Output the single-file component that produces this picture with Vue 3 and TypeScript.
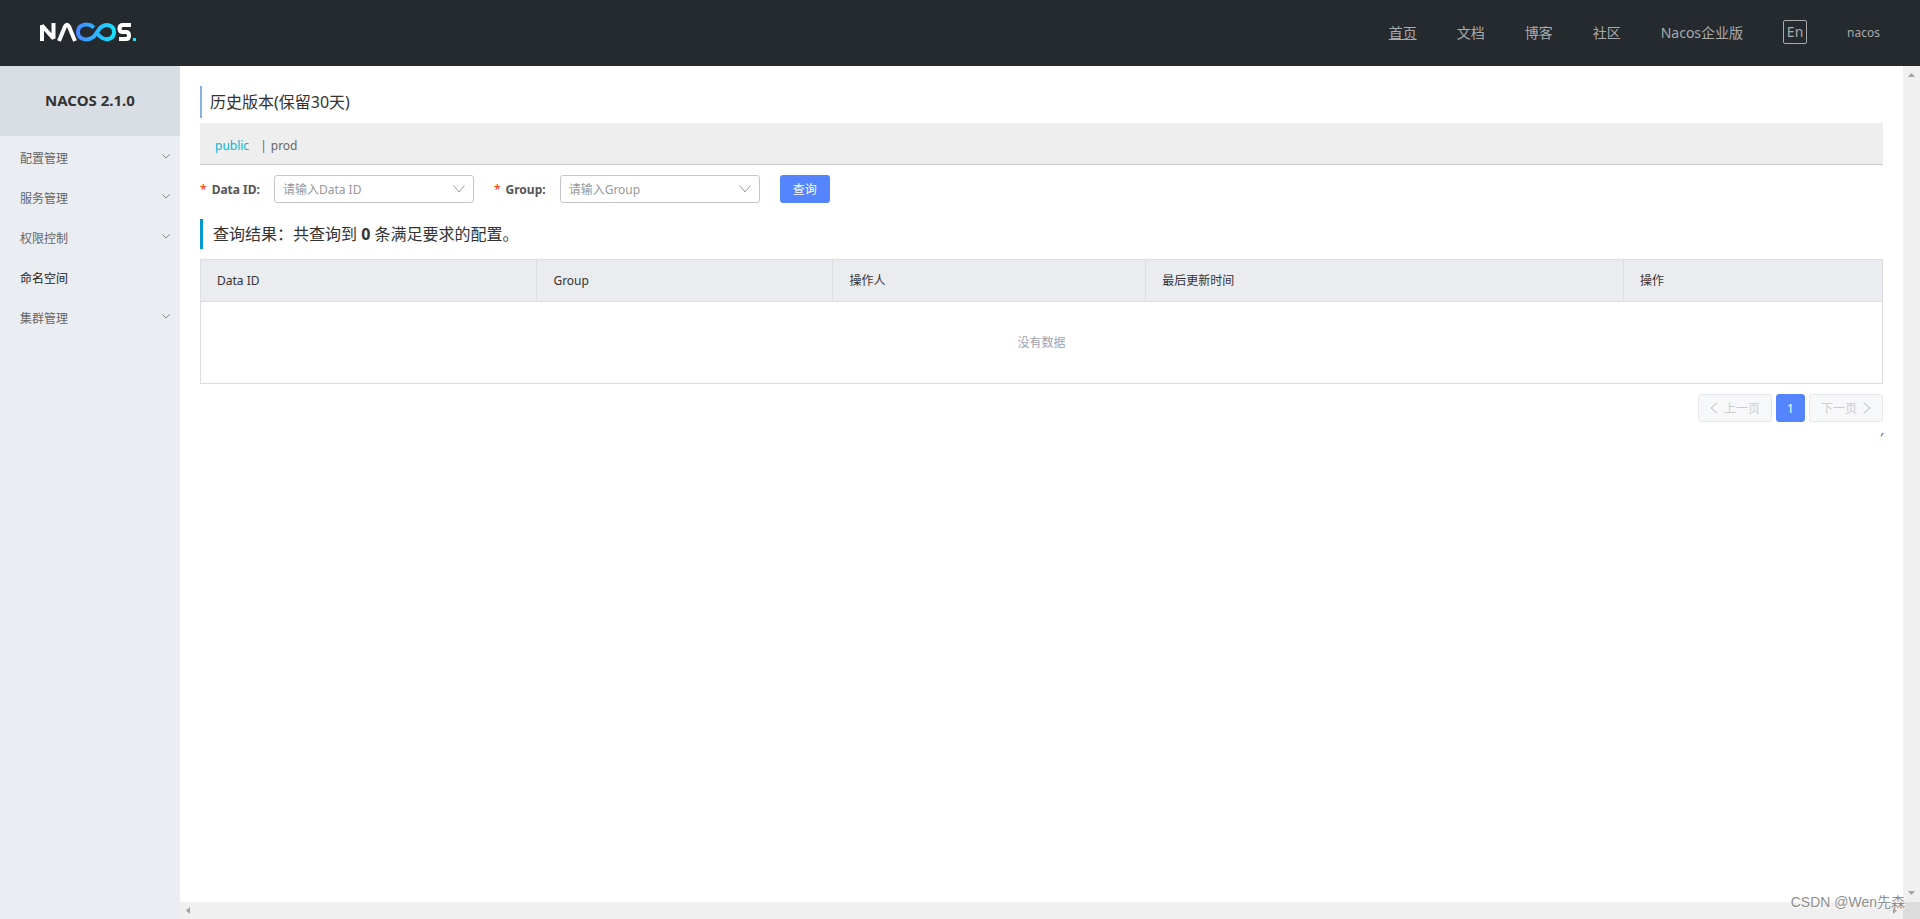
<script setup lang="ts">
import { ref } from 'vue'

const links: string[] = ['首页', '文档', '博客', '社区', 'Nacos企业版']
const menu = [
  { label: '配置管理', group: true },
  { label: '服务管理', group: true },
  { label: '权限控制', group: true },
  { label: '命名空间', group: false },
  { label: '集群管理', group: true },
]
const columns: string[] = ['Data ID', 'Group', '操作人', '最后更新时间', '操作']
const dataId = ref('')
const group = ref('')
</script>

<template>
  <div class="page">
    <header class="top">
      <a href="#" class="logo" aria-label="Nacos">
        <svg width="98" height="20" viewBox="0 0 98 20" fill="none" stroke-width="4">
          <defs>
            <linearGradient id="loop" gradientUnits="userSpaceOnUse" x1="36" y1="0" x2="76" y2="0">
              <stop offset="0" stop-color="#4687ff" />
              <stop offset="1" stop-color="#12e6ff" />
            </linearGradient>
          </defs>
          <path d="M2 19V3.500L13.500 16.500V1" stroke="#fff" stroke-linejoin="bevel" />
          <path d="M19 19L25 4.500Q27 1 29 4.500L35 19" stroke="#fff" />
          <path d="M54 5.500C48 0.500 38 2 38 10S48 19.500 54 14.500L60 6C66 0.500 74 3 74 10S66 19.500 60 14.500L56 10" stroke="url(#loop)" />
          <path d="M91 3H83Q79.500 3 79.500 6.500T83 10H86Q89 10 89 13.500T86 17H79" stroke="#fff" />
          <rect x="93" y="16" width="3" height="3" fill="#12e6ff" />
        </svg>
      </a>
      <nav class="links">
        <a v-for="(l, i) in links" :key="l" href="#" :class="{ under: i === 0 }">{{ l }}</a>
        <button type="button" class="lang">En</button>
        <a href="#" class="user">nacos</a>
      </nav>
    </header>

    <div class="body">
      <aside class="side">
        <h1 class="version">NACOS 2.1.0</h1>
        <ul class="menu">
          <li v-for="m in menu" :key="m.label">
            <a href="#" :class="{ leaf: !m.group }">
              <span>{{ m.label }}</span>
              <svg v-if="m.group" width="8" height="5" viewBox="0 0 8 5" fill="none" stroke="#888">
                <path d="M0.500 0.500L4 4L7.500 0.500" />
              </svg>
            </a>
          </li>
        </ul>
      </aside>

      <div class="pane">
        <main class="content">
          <h2 class="title">历史版本(保留30天)</h2>
          <div class="spaces">
            <a href="#" class="current">public</a>
            <span class="bar">|</span>
            <a href="#">prod</a>
          </div>

          <form class="query" @submit.prevent>
            <label for="data-id"><i>*</i>Data ID:</label>
            <div class="select">
              <select id="data-id" v-model="dataId">
                <option value="">请输入Data ID</option>
              </select>
              <svg width="12" height="8" viewBox="0 0 12 8" fill="none" stroke="#999"><path d="M0.500 0.500L6 7L11.500 0.500" /></svg>
            </div>
            <label for="group"><i>*</i>Group:</label>
            <div class="select">
              <select id="group" v-model="group">
                <option value="">请输入Group</option>
              </select>
              <svg width="12" height="8" viewBox="0 0 12 8" fill="none" stroke="#999"><path d="M0.500 0.500L6 7L11.500 0.500" /></svg>
            </div>
            <button type="submit">查询</button>
          </form>

          <h3 class="result">查询结果：共查询到 <strong>0</strong> 条满足要求的配置。</h3>

          <table>
            <colgroup>
              <col class="c1" /><col class="c2" /><col class="c3" /><col class="c4" /><col class="c5" />
            </colgroup>
            <thead>
              <tr><th v-for="c in columns" :key="c" scope="col">{{ c }}</th></tr>
            </thead>
            <tbody>
              <tr><td :colspan="columns.length">没有数据</td></tr>
            </tbody>
          </table>

          <nav class="pager">
            <button type="button" disabled>
              <svg width="8" height="12" viewBox="0 0 8 12" fill="none" stroke="#bbb"><path d="M7.500 0.500L1 6L7.500 11.500" /></svg>
              <span>上一页</span>
            </button>
            <button type="button" class="on">1</button>
            <button type="button" disabled>
              <span>下一页</span>
              <svg width="8" height="12" viewBox="0 0 8 12" fill="none" stroke="#bbb"><path d="M0.500 0.500L7 6L0.500 11.500" /></svg>
            </button>
          </nav>
          <p class="mark">′</p>
        </main>
        <div class="track vertical">
          <svg width="7" height="4" viewBox="0 0 7 4" fill="#a3a3a3"><path d="M3.500 0L7 4H0Z" /></svg>
          <svg width="7" height="4" viewBox="0 0 7 4" fill="#a3a3a3"><path d="M0 0H7L3.500 4Z" /></svg>
        </div>
        <div class="track horizontal">
          <svg width="4" height="7" viewBox="0 0 4 7" fill="#a3a3a3"><path d="M4 0V7L0 3.500Z" /></svg>
          <svg width="4" height="7" viewBox="0 0 4 7" fill="#a3a3a3"><path d="M0 0L4 3.500L0 7Z" /></svg>
        </div>
        <div class="corner"></div>
      </div>
    </div>
    <div class="watermark">CSDN @Wen先森</div>
  </div>
</template>

<style>
body {
  margin: 0;
}
</style>

<style scoped>
.page {
  position: relative;
  display: flex;
  flex-direction: column;
  height: 100vh;
  font: 12px/18px "Noto Sans", "Noto Sans CJK SC", sans-serif;
  color: #333;
}
.page * {
  box-sizing: border-box;
}
a {
  color: inherit;
  text-decoration: none;
}
button,
select {
  font: inherit;
}
h1,
h2,
h3,
p,
ul {
  margin: 0;
  padding: 0;
  font-weight: normal;
  list-style: none;
}
.top {
  display: flex;
  align-items: center;
  justify-content: space-between;
  height: 66px;
  padding: 0 40px 2px;
  background: #252a2f;
}
.logo {
  display: flex;
}
.links {
  display: flex;
  align-items: center;
  gap: 40px;
  font-size: 14px;
  color: #a8aaac;
}
.links a {
  padding-top: 2px;
}
.links .under {
  text-decoration: underline;
}
.lang {
  width: 24px;
  height: 24px;
  padding: 0;
  border: 1px solid #a8aaac;
  border-radius: 2px;
  background: none;
  color: inherit;
  line-height: 20px;
}
.links .user {
  font-size: 12px;
}
.body {
  display: flex;
  flex: 1;
  min-height: 0;
}
.side {
  width: 180px;
  background: #eaedf2;
}
.version {
  height: 70px;
  background: #d9dde4;
  font-size: 15px;
  font-weight: bold;
  line-height: 68px;
  text-align: center;
}
.menu a {
  display: flex;
  align-items: center;
  justify-content: space-between;
  height: 40px;
  padding: 0 10px 0 20px;
  color: #666;
}
.menu span {
  padding-top: 6px;
}
.menu .leaf {
  color: #222;
}
.pane {
  display: grid;
  flex: 1;
  grid-template-columns: 1fr 17px;
  grid-template-rows: 1fr 17px;
  min-width: 0;
}
.content {
  padding: 20px;
  min-width: 0;
}
.title {
  height: 32px;
  margin-bottom: 5px;
  padding-left: 8px;
  border-left: 2px solid #86b3de;
  font-size: 16px;
  line-height: 32px;
}
.spaces {
  display: flex;
  height: 42px;
  padding: 0 15px;
  border-bottom: 1px solid #ccc;
  background: #eee;
  color: #666;
  line-height: 45px;
}
.spaces .current {
  color: #00b7d3;
}
.bar {
  margin: 0 4px 0 11px;
}
.query {
  display: flex;
  align-items: center;
  margin: 10px 0 16px;
}
.query label {
  padding-top: 2px;
  margin-right: 14px;
  color: #555;
  font-weight: bold;
}
.query i {
  margin-right: 5px;
  color: #ff3000;
  font-weight: normal;
  font-style: normal;
}
.select {
  position: relative;
  width: 200px;
  margin-right: 20px;
}
.select select {
  display: block;
  width: 100%;
  height: 28px;
  padding: 2px 28px 0 8px;
  border: 1px solid #c4c6cf;
  border-radius: 3px;
  background: #fff;
  color: #999;
  appearance: none;
}
.select svg {
  position: absolute;
  top: 10px;
  right: 9px;
  pointer-events: none;
}
.query button {
  width: 50px;
  height: 28px;
  padding: 2px 0 0;
  border: 0;
  border-radius: 3px;
  background: #5584ff;
  color: #fff;
}
.result {
  height: 30px;
  margin-bottom: 10px;
  padding-left: 10px;
  border-left: 3px solid #09c;
  font-size: 16px;
  line-height: 30px;
}
table {
  width: 100%;
  border-collapse: collapse;
  table-layout: fixed;
}
.c1 { width: 20%; }
.c2 { width: 17.600%; }
.c3 { width: 18.600%; }
.c4 { width: 28.400%; }
.c5 { width: 15.400%; }
th,
td {
  border: 1px solid #dcdee3;
}
th {
  height: 42px;
  padding: 0 16px;
  background: #ebecf0;
  font-weight: normal;
  text-align: left;
}
td {
  height: 82px;
  padding: 0;
  color: #a0a2ad;
  text-align: center;
}
.pager {
  display: flex;
  justify-content: flex-end;
  gap: 4px;
  margin-top: 10px;
}
.pager button {
  display: flex;
  align-items: center;
  justify-content: center;
  gap: 6px;
  width: 74px;
  height: 28px;
  padding: 0;
  border: 1px solid #e6e7eb;
  border-radius: 3px;
  background: #f7f8fa;
  color: #ccc;
}
.pager span {
  padding-top: 2px;
}
.pager .on {
  width: 29px;
  padding-top: 2px;
  border-color: #5584ff;
  background: #5584ff;
  color: #fff;
}
.mark {
  margin-top: 7px;
  text-align: right;
}
.track {
  display: flex;
  align-items: center;
  justify-content: space-between;
  background: #f0f0f0;
}
.vertical {
  flex-direction: column;
  padding: 7px 0;
}
.horizontal {
  padding: 0 6px;
}
.corner {
  background: #dcdcdc;
}
.watermark {
  position: absolute;
  right: 15px;
  bottom: 6px;
  color: #8f8f8f;
  font: 14px/22px "Liberation Sans", "Noto Sans CJK SC", sans-serif;
  text-shadow: 1px 1px 0 #fff;
}
</style>
